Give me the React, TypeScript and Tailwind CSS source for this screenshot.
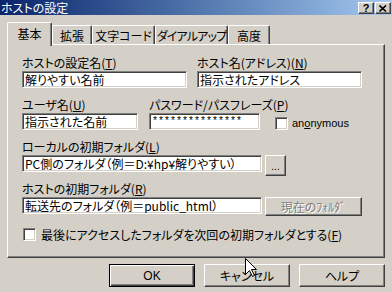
import type { ReactNode } from "react"

const sunken =
  "bg-white border border-t-[#808080] border-l-[#808080] border-b-white border-r-white shadow-[inset_1px_1px_0_#404040,inset_-1px_-1px_0_#d4d0c8]"
const raised =
  "bg-[#d4d0c8] border border-t-white border-l-white border-r-[#404040] border-b-[#404040] shadow-[inset_-1px_-1px_0_#808080]"

function Tab({ label, w, active }: { label: string; w: string; active?: boolean }) {
  return (
    <div
      className={`${w} ${
        active ? "relative z-10 h-[24px] -mb-[2px] pt-[3px]" : "h-[19px] pt-[2px]"
      } rounded-tl-[2px] rounded-tr-[2px] border-l border-t border-r border-l-white border-t-white border-r-[#404040] shadow-[inset_-1px_0_0_#808080] bg-[#d4d0c8] text-center leading-[15px] whitespace-nowrap overflow-hidden`}
    >
      {label}
    </div>
  )
}

function Field({ label, w, value }: { label: ReactNode; w: string; value: string }) {
  return (
    <div className={`${w} flex flex-col`}>
      <div className="h-[16px] leading-[16px] whitespace-nowrap">{label}</div>
      <div className={`${w} h-[17px] ${sunken} pl-[2px] leading-[15px] whitespace-nowrap overflow-hidden`}>{value}</div>
    </div>
  )
}

function Check() {
  return <div className={`w-[13px] h-[13px] shrink-0 ${sunken}`} />
}

function TitleBtn({ children }: { children: ReactNode }) {
  return (
    <div className="flex w-[16px] h-[12px] items-center justify-center bg-[#d4d0c8] border border-t-white border-l-white border-r-[#404040] border-b-[#404040] shadow-[inset_-1px_-1px_0_#808080]">
      {children}
    </div>
  )
}

export default function App() {
  return (
    <div className="relative w-[392px] h-[292px] overflow-hidden bg-[#d4d0c8] text-black text-[12px] font-['Noto_Sans_CJK_JP',sans-serif] [font-feature-settings:'palt']">
      {/* title bar */}
      <div className="flex h-[15px] items-start justify-between bg-linear-to-r from-[#0a246a] to-[#a6caf0] pl-[1px] pr-[1px]">
        <span className="text-[12px] leading-[15px] text-white">ホストの設定</span>
        <div className="flex gap-[1px] pt-[2px]">
          <TitleBtn>
            <span className="font-['Liberation_Sans',sans-serif] text-[11px] font-bold leading-[10px]">?</span>
          </TitleBtn>
          <TitleBtn>
            <svg width="8" height="7" viewBox="0 0 8 7">
              <path d="M0.5 0.5 L7 6.5 M7 0.5 L0.5 6.5" stroke="#000" strokeWidth="1.6" />
            </svg>
          </TitleBtn>
        </div>
      </div>

      {/* tabs */}
      <div className="mt-[7px] ml-[7px] flex h-[22px] items-end">
        <Tab label="基本" w="w-[45px]" active />
        <Tab label="拡張" w="w-[40px]" />
        <Tab label="文字コード" w="w-[63px]" />
        <Tab label="ダイアルアップ" w="w-[73px] tracking-[-0.8px]" />
        <Tab label="高度" w="w-[42px]" />
      </div>

      {/* panel */}
      <div className="ml-[7px] w-[378px] h-[214px] border border-t-white border-l-white border-r-[#404040] border-b-[#404040] shadow-[inset_-1px_-1px_0_#808080] pl-[14px] pt-[10px]">
        <div className="flex gap-[10px]">
          <Field label={<>ホストの設定名(<u>T</u>)</>} w="w-[165px]" value="解りやすい名前" />
          <Field label={<>ホスト名(アドレス)(<u>N</u>)</>} w="w-[165px]" value="指示されたアドレス" />
        </div>

        <div className="mt-[9px] flex">
          <Field label={<>ユーザ名(<u>U</u>)</>} w="w-[116px]" value="指示された名前" />
          <div className="ml-[11px] flex w-[111px] flex-col">
            <div className="h-[16px] leading-[16px] whitespace-nowrap">
              パスワード/パスフレーズ(<u>P</u>)
            </div>
            <div className={`w-[111px] h-[17px] ${sunken} pl-[2px] font-['Liberation_Mono',monospace] text-[10px] leading-[15px]`}>
              ***************
            </div>
          </div>
          <div className="ml-[15px] flex flex-col">
            <div className="h-[16px]" />
            <div className="flex h-[17px] items-end gap-[4px]">
              <Check />
              <span className="font-['Liberation_Sans',sans-serif] text-[11px] leading-[13px]">
                an<u>o</u>nymous
              </span>
            </div>
          </div>
        </div>

        <div className="mt-[9px]">
          <div className="h-[16px] leading-[16px]">
            ローカルの初期フォルダ(<u>L</u>)
          </div>
          <div className="flex h-[17px] items-start gap-[3px]">
            <div className={`w-[240px] h-[17px] ${sunken} pl-[2px] leading-[15px] whitespace-nowrap overflow-hidden`}>
              PC側のフォルダ（例＝D:¥hp¥解りやすい）
            </div>
            <div className={`flex w-[21px] h-[21px] items-center justify-center ${raised} font-['Liberation_Sans',sans-serif] text-[10px] leading-[10px] pt-[3px]`}>
              ...
            </div>
          </div>
        </div>

        <div className="mt-[9px]">
          <div className="h-[16px] leading-[16px]">
            ホストの初期フォルダ(<u>R</u>)
          </div>
          <div className="flex h-[17px] items-start gap-[3px]">
            <div className={`w-[240px] h-[17px] ${sunken} pl-[2px] leading-[15px] whitespace-nowrap overflow-hidden`}>
              転送先のフォルダ（例＝public_html）
            </div>
            <div className={`flex w-[97px] h-[19px] items-center justify-center ${raised} text-[#808080] [text-shadow:1px_1px_0_#fff] leading-[15px]`}>
              現在のﾌｫﾙﾀﾞ
            </div>
          </div>
        </div>

        <div className="mt-[14px] ml-[1px] flex items-center gap-[5px]">
          <Check />
          <span className="leading-[13px] whitespace-nowrap">
            最後にアクセスしたフォルダを次回の初期フォルダとする(<u>F</u>)
          </span>
        </div>
      </div>

      {/* buttons */}
      <div className="mt-[6px] flex justify-end gap-[9px] pr-[7px]">
        <div className="flex w-[86px] h-[23px] items-center justify-center border border-black shadow-[inset_1px_1px_0_#fff,inset_-1px_-1px_0_#404040,inset_-2px_-2px_0_#808080] font-['Liberation_Sans',sans-serif]">
          OK
        </div>
        <div className={`flex w-[86px] h-[23px] items-center justify-center ${raised}`}>キャンセル</div>
        <div className={`flex w-[86px] h-[23px] items-center justify-center ${raised}`}>ヘルプ</div>
      </div>

      {/* mouse pointer */}
      <svg className="absolute left-[245px] top-[258px]" width="13" height="20" viewBox="0 0 13 20">
        <path
          d="M0.5 0.5 L0.5 16.5 L4.5 12.5 L7.5 18.5 L9.5 17.5 L6.5 11.5 L11.5 11.5 Z"
          fill="#fff"
          stroke="#000"
          strokeWidth="1"
        />
      </svg>
    </div>
  )
}
